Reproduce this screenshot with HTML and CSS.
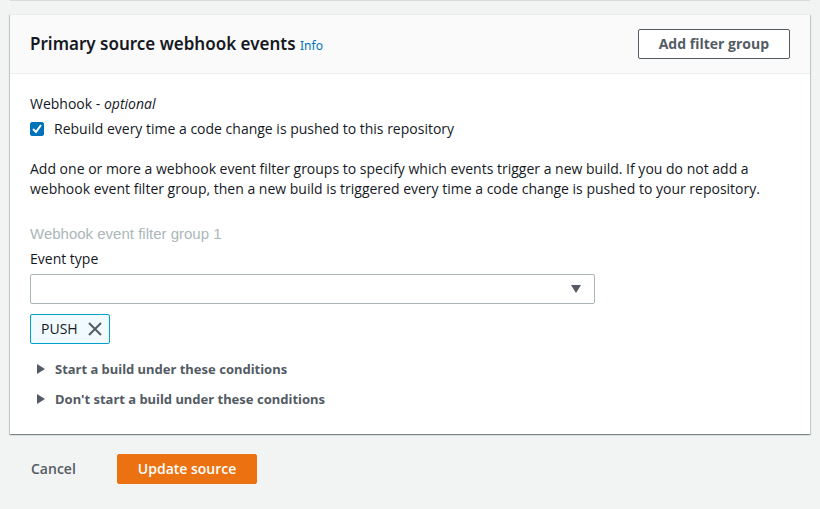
FILE: index.html
```html
<!DOCTYPE html>
<html lang="en">
<head>
<meta charset="utf-8">
<meta name="viewport" content="width=device-width, initial-scale=1">
<title>Edit source</title>
<link rel="stylesheet" href="styles.css">
</head>
<body>
<div class="previous-panel"></div>
<form class="page">
  <section class="panel">
    <header class="panel-header">
      <h2 class="panel-title">Primary source webhook events <a class="info" href="#">Info</a></h2>
      <button class="button button-normal" type="button">Add filter group</button>
    </header>
    <div class="panel-body">
      <div class="field-title">Webhook - <em>optional</em></div>
      <div class="check-row">
        <input class="checkbox" type="checkbox" id="rebuild" checked>
        <label for="rebuild">Rebuild every time a code change is pushed to this repository</label>
      </div>
      <p class="description">Add one or more a webhook event filter groups to specify which events trigger a new build. If you do not add a webhook event filter group, then a new build is triggered every time a code change is pushed to your repository.</p>
      <h3 class="group-title">Webhook event filter group 1</h3>
      <label class="select-label" for="event-type">Event type</label>
      <div class="select-box">
        <select class="select" id="event-type"><option></option></select>
        <svg class="select-arrow" width="10" height="8" viewBox="0 0 10 8"><path d="M0 0H10L5 8Z"/></svg>
      </div>
      <div class="token">
        <span>PUSH</span>
        <button class="token-remove" type="button" aria-label="Remove PUSH">
          <svg width="14" height="14" viewBox="0 0 14 14"><path d="M1 1L13 13M13 1L1 13"/></svg>
        </button>
      </div>
      <details class="expander">
        <summary><svg width="8" height="10" viewBox="0 0 8 10"><path d="M0 0L8 5L0 10Z"/></svg>Start a build under these conditions</summary>
      </details>
      <details class="expander">
        <summary><svg width="8" height="10" viewBox="0 0 8 10"><path d="M0 0L8 5L0 10Z"/></svg>Don't start a build under these conditions</summary>
      </details>
    </div>
  </section>
  <footer class="actions">
    <button class="button button-link" type="button">Cancel</button>
    <button class="button button-primary" type="submit">Update source</button>
  </footer>
</form>
</body>
</html>
```
FILE: styles.css
```css
* {
  box-sizing: border-box;
}

body {
  margin: 0;
  background: #f2f3f3;
  color: #16191f;
  font: 14px/20px "Open Sans", sans-serif;
}

.previous-panel {
  height: 1px;
  margin: 0 10px 13px;
  background: #d5dbdb;
}

.page {
  margin: 0 10px;
}

.panel {
  background: #fff;
  border-top: 1px solid #eaeded;
  box-shadow: 0 1px 1px 0 rgba(0, 28, 36, 0.3), 1px 1px 1px 0 rgba(0, 28, 36, 0.15), -1px 1px 1px 0 rgba(0, 28, 36, 0.15);
}

.panel-header {
  display: flex;
  align-items: center;
  justify-content: space-between;
  padding: 14px 20px;
  background: #fafafa;
  border-bottom: 1px solid #eaeded;
}

.panel-title {
  margin: 0;
  font: 600 17px/30px "Noto Sans", sans-serif;
}

.info {
  color: #0073bb;
  font-size: 12px;
  line-height: 20px;
  font-weight: 400;
  text-decoration: none;
}

.button {
  height: 30px;
  padding: 0 20px;
  border: 1px solid transparent;
  border-radius: 2px;
  font: 600 14px/20px "Open Sans", sans-serif;
}

.button-normal {
  background: #fff;
  border-color: #545b64;
  color: #545b64;
  font-weight: 700;
}

.button-link {
  background: transparent;
  color: #545b64;
}

.button-primary {
  background: #ec7211;
  border-color: #ec7211;
  color: #fff;
}

.panel-body {
  padding: 20px 20px 25px;
}

.check-row {
  display: flex;
  align-items: center;
  gap: 10px;
  margin-top: 5px;
}

.checkbox {
  appearance: none;
  width: 14px;
  height: 14px;
  margin: 0;
  border-radius: 2px;
  border: 1px solid #879596;
}

.checkbox:checked {
  border-color: #0073bb;
  background: #0073bb url("data:image/svg+xml,%3Csvg xmlns='http://www.w3.org/2000/svg' viewBox='0 0 12 12'%3E%3Cpath d='M2 6l3 3 5-7' fill='none' stroke='%23fff' stroke-width='2'/%3E%3C/svg%3E") center / 12px no-repeat;
}

.description {
  max-width: 740px;
  margin: 20px 0 25px;
}

.group-title {
  margin: 0 0 5px;
  color: #aab7b8;
  font: 400 15px/20px "Liberation Sans", sans-serif;
}

.select-label {
  display: block;
  margin-bottom: 5px;
}

.select-box {
  position: relative;
  width: calc(75% - 5px);
}

.select {
  display: block;
  appearance: none;
  width: 100%;
  height: 30px;
  padding: 0 30px 0 10px;
  border: 1px solid #aab7b8;
  border-radius: 2px;
  background: #fff;
  color: inherit;
  font: inherit;
}

.select-arrow {
  position: absolute;
  top: 11px;
  right: 14px;
  fill: #545b64;
  pointer-events: none;
}

.token {
  display: flex;
  align-items: center;
  gap: 10px;
  width: fit-content;
  height: 30px;
  margin: 10px 0 15px;
  padding: 0 7px 0 10px;
  border: 1px solid #00a1c9;
  border-radius: 2px;
  background: #f1faff;
}

.token-remove {
  display: flex;
  padding: 0;
  border: 0;
  background: none;
}

.token-remove path {
  stroke: #545b64;
  stroke-width: 2;
}

.expander {
  padding-left: 7px;
  color: #545b64;
  font: 700 13px/20px "Noto Sans", sans-serif;
}

.expander + .expander {
  margin-top: 10px;
}

.expander summary {
  display: flex;
  align-items: center;
  gap: 10px;
}

.expander path {
  fill: #545b64;
}

.actions {
  display: flex;
  gap: 20px;
  padding: 20px 0;
}
```
